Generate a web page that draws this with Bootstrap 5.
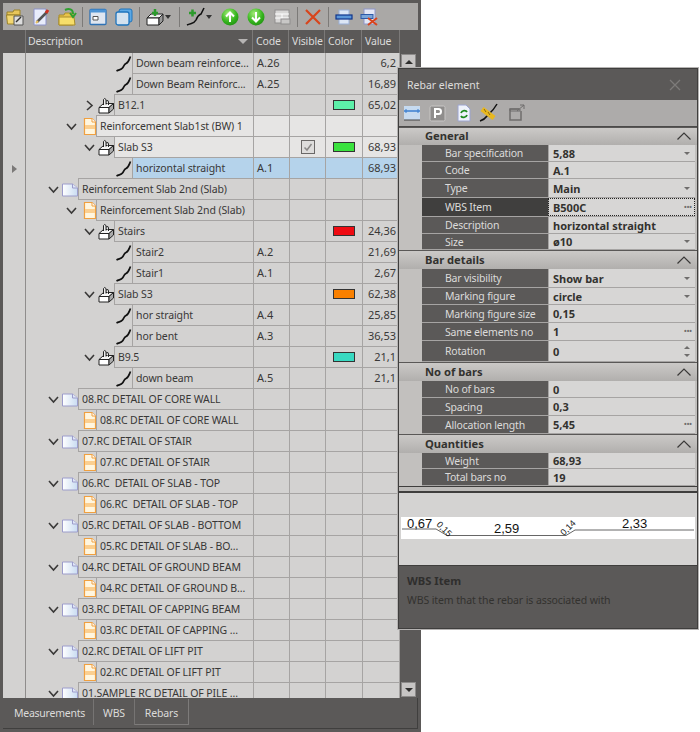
<!DOCTYPE html>
<html lang="en">
<head>
<meta charset="utf-8">
<title>Rebars</title>
<link href="https://cdn.jsdelivr.net/npm/bootstrap@5.3.0/dist/css/bootstrap.min.css" rel="stylesheet">
<style>
html,body{margin:0;background:#fff;height:732px;overflow:hidden}
body{font-family:"Noto Sans","Liberation Sans",sans-serif;font-size:11px;line-height:1;color:#393837}
.app-win{width:421px;height:732px;background:#5b5958;padding:3px}
.tb{height:27px;background:#aaa8a6;padding-left:0}
.tb-i{width:26px;height:26px;flex:none;display:flex;align-items:center;justify-content:center}
.tb-i:first-child{margin-left:-1px}
.tb-i svg{width:20px;height:20px;flex:none}
.tb-i.wide{width:35px;justify-content:flex-start;padding-left:3px}
.tb-i.wide2{padding-left:4px}
.tb-sep{width:1px;height:20px;background:#7c7a78;margin:0 2px;flex:none;align-self:center}
.hd{height:23px;color:#dcdbda;font-size:10.5px;letter-spacing:-.15px}
.hd>div{height:100%;display:flex;align-items:center;padding-left:4px;padding-bottom:0;border-right:1px solid #7b7978}
.hd .gut{border-right:1px solid #7b7978;background:none}
.hd .tree{justify-content:space-between;padding-right:4px;padding-left:2px}
.hd .c-val{border-right:1px solid #7b7978}
.tri-d{width:0;height:0;border-left:5px solid transparent;border-right:5px solid transparent;border-top:5px solid #b6b4b3}
.body-wrap{height:645px;overflow:hidden}
.gridz{width:397px;height:645px;overflow:hidden;background:#d3d2d1;flex:none}
.gr{height:21px}
.gut{width:23px;flex:none;background:#d3d2d1;border-right:1px solid #8f8d8c;display:flex;align-items:center;justify-content:center}
.tree{width:227px;flex:none;align-items:stretch}
.t0{padding-left:22px}.t1{padding-left:40px}.t2{padding-left:58px}.t3{padding-left:76px}
.chv{width:14px;flex:none;display:flex;align-items:center}
.chv svg{width:11px;height:11px;fill:none;stroke:#3a3938;stroke-width:1.6}
.ic{width:16px;flex:none;height:21px}
.tcell{flex:1 1 0;min-width:0;white-space:nowrap;overflow:hidden;padding:0 0 0 3px;display:flex;align-items:center;border-left:1px solid #a6a4a3;border-bottom:1px solid #a6a4a3;box-shadow:0 -1px 0 #a6a4a3;font-size:10.5px;letter-spacing:-.1px}
.gc{height:21px;border-left:1px solid #a6a4a3;border-bottom:1px solid #a6a4a3;display:flex;align-items:center;flex:none;padding-bottom:2px}
.c-code{width:36px;padding-left:3px}
.c-vis{width:36px;justify-content:center}
.c-col{width:37px;justify-content:center}
.c-val{width:38px;justify-content:flex-end;padding-right:3px;border-right:1px solid #a6a4a3;overflow:hidden}
.hd .c-code,.hd .c-vis,.hd .c-col,.hd .c-val{justify-content:flex-start;padding-left:3px;padding-right:0}
.lit .tcell,.lit .gc{background:#e6e5e4}
.sel .tcell,.sel .gc{background:#b5d3eb}
.sw{width:22px;height:10px;border:1px solid #333;margin-top:1px}
.sw-a{background:#5df0a9}.sw-b{background:#3ae23e}.sw-c{background:#ef0b12}.sw-d{background:#f98000}.sw-e{background:#38d9c1}
.chk{width:14px;height:14px;border:1px solid #6a6867;background:#dedddc;display:flex;align-items:center;justify-content:center;margin-top:1px}
.chk svg{width:10px;height:10px;fill:none;stroke:#8a8887;stroke-width:1.5}
.sb{width:18px;flex:none;padding:1px 2px 1px 1px}
.sb-b{height:15px;width:15px;background:#c7c5c4;border:1px solid #8d8b8a;display:flex;align-items:center;justify-content:center}
.tri-u8{width:0;height:0;border-left:4px solid transparent;border-right:4px solid transparent;border-bottom:4px solid #2f2e2d}
.tri-d8{width:0;height:0;border-left:4px solid transparent;border-right:4px solid transparent;border-top:4px solid #2f2e2d}
.tabs-bar{height:31px;align-items:flex-start;border-bottom:1px solid #403f3e;border-right:1px solid #403f3e}
.nav .tab-i{color:#dcdbda;font-size:10.5px;letter-spacing:-.1px;height:26px;display:flex;align-items:center;justify-content:center;padding-top:3px;margin-top:1px;border-right:1px solid #767473}
.nav .tab-a{width:91px;justify-content:flex-start;padding-left:11px;letter-spacing:-.25px}
.nav .tab-b{width:41px}
.nav .tab-c{width:54px;border:1px solid #7d7b7a;border-top:none;border-left:none}
.arrow-gut{width:0;height:0;border-top:4px solid transparent;border-bottom:4px solid transparent;border-left:5px solid #7b7978}
.pop{left:398px;top:68px;width:300px;height:561px;background:#5b5958;border:1px solid #3f3e3d;box-shadow:0 0 0 1px #b5b3b2}
.pop-t{height:31px;padding:1px 16px 0 8px;color:#dedddc;font-size:10.5px}
.pop-t svg{width:12px;height:12px;stroke:#7d7b7a;stroke-width:1.3;fill:none}
.pop-tb{height:27px;background:#adabaa;border-bottom:1px solid #4b4a49;padding-left:3px;gap:5px}
.pop-tb svg{width:20px;height:20px;flex:none}
.pop-tb .ml2{margin-left:2px}
.pop-tb .ml3{margin-left:3px}
.gh{background:linear-gradient(#cbc9c7,#b1afad);border-top:1px solid #5a5857;font-weight:700;color:#33322f;padding:0 6px 1px 26px;font-size:11.2px}
.gh svg{width:14px;height:8px;fill:none;stroke:#3a3938;stroke-width:1.2}
.gbody{background:#c2c0be;padding-left:23px;padding-right:2px}
.pr{border-bottom:1px solid #a6a4a3}
.pl{width:126px;flex:none;background:#5b5958;color:#dcdbda;padding:1px 0 0 23px;display:flex;align-items:center;font-size:10.5px;letter-spacing:-.2px;white-space:nowrap}
.pv{flex:1 1 0;background:#d7d6d5;font-weight:700;color:#33322f;padding:0 3px 0 4px;display:flex;align-items:center;justify-content:space-between;border-left:1px solid #a6a4a3}
.cur .pl{background:#403f3e}
.cur .pv{outline:1px dotted #222;outline-offset:-1px}
.dd{width:0;height:0;border-left:3px solid transparent;border-right:3px solid transparent;border-top:3px solid #6f6d6c;margin-right:2px}
.tb .dd{border-left-width:3.5px;border-right-width:3.5px;border-top:4px solid #333;margin:0;flex:none}
.dots{color:#6f6d6c;font-size:7px;line-height:1}
.spin{display:flex;flex-direction:column;gap:5px;margin-right:2px}
.spin i{display:block;width:0;height:0;border-left:3px solid transparent;border-right:3px solid transparent}
.spin i:first-child{border-bottom:3px solid #6f6d6c}.spin i:last-child{border-top:3px solid #6f6d6c}
.h16{height:16px}.h17{height:17px}.h18{height:18px}.h19{height:19px}.h21{height:21px}
.strip{height:4px;background:#bdbbb9;border-top:1px solid #3f3e3d;border-bottom:2px solid #3f3e3d;box-sizing:content-box}
.prev{height:72px;background:#d4d3d2;padding:24px 2px 0 2px}
.prev svg{display:block;background:#fff;width:294px;height:22px}
.prev text{font-family:"Liberation Sans",Arial,sans-serif;fill:#111}
.help{height:63px;padding:9px 8px 0 8px;color:#2f2e2d;border-top:1px solid #3f3e3d}
.help b{display:block;font-size:11.2px;margin-bottom:9px}
.help p{margin:0;font-size:10.5px;letter-spacing:-.1px;color:#33322f}
</style>
</head>
<body>
<svg width="0" height="0" class="position-absolute">
<defs>
<linearGradient id="gdoc" x1="0" y1="0" x2="1" y2="0"><stop offset="0" stop-color="#fff"/><stop offset="1" stop-color="#c9dcf2"/></linearGradient>
<radialGradient id="ggr" cx=".4" cy=".3" r=".8"><stop offset="0" stop-color="#a4ec7a"/><stop offset=".6" stop-color="#35b41d"/><stop offset="1" stop-color="#1d8a10"/></radialGradient>
<symbol id="i-bar" viewBox="0 0 16 21"><path d="M0.5 18 C3 16.5 5 17 6.500 15 C8 13 8 11.500 10 10.500 C12.500 9.500 13 7 14.500 3.500" fill="none" stroke="#111" stroke-width="1.700"/></symbol>
<symbol id="i-box" viewBox="0 0 16 21"><path d="M1 12.500L5.500 8.500H15.500L11 12.500Z" fill="#f5f5f5" stroke="#222"/><path d="M5.500 10V4.500Q6.500 2.500 8 4.500V9.500M8 6Q10.500 4.500 10.500 7V10" fill="#eee" stroke="#222"/><path d="M1 12.500H11V18H1Z" fill="#fff" stroke="#222"/><path d="M11 12.500L15.500 8.500V14L11 18Z" fill="#aaa" stroke="#222"/></symbol>
<symbol id="i-doc" viewBox="0 0 16 21"><path d="M0.500 5H10.500L15.500 9V17H0.500Z" fill="url(#gdoc)" stroke="#9c9ccb"/><path d="M10.500 5V9H15.500" fill="#dfe6f6" stroke="#9c9ccb"/></symbol>
<symbol id="i-sheet" viewBox="0 0 16 21"><path d="M4.500 2.500H12L15.500 6V18.500H4.500Z" fill="#fff6df" stroke="#f0a040" stroke-width="1.200"/><path d="M5 9H15V13H5Z" fill="#fbcf90"/><path d="M12 2.500V6H15.500" fill="#fff" stroke="#f0a040"/></symbol>
<symbol id="i-dn" viewBox="0 0 11 11"><path d="M1 3L5.500 8L10 3"/></symbol>
<symbol id="i-rt" viewBox="0 0 11 11"><path d="M3 1L8 5.500L3 10"/></symbol>
<symbol id="i-up" viewBox="0 0 14 8"><path d="M0.500 7.500L7 1L13.500 7.500"/></symbol>
</defs>
</svg>
<div class="app-win d-flex flex-column">
  <div class="tb btn-toolbar d-flex align-items-center flex-nowrap">
    <div class="tb-i"><svg viewBox="0 0 20 20"><path d="M2 5H8L9 3H15V8H2Z" fill="#e8c65a" stroke="#9c8328"/><path d="M1.500 8H15L16 17H2.500Z" fill="#f3d772" stroke="#9c8328"/><path d="M9 9H18V18H9Z" fill="#ddd" stroke="#555"/><path d="M11 15L16 10" stroke="#333" stroke-width="1.500"/></svg></div>
    <div class="tb-i"><svg viewBox="0 0 20 20"><path d="M3 2H15V18H3Z" fill="#e8ecfb" stroke="#8c92c8"/><path d="M6 15L16 5" stroke="#555" stroke-width="2.500"/><path d="M15 6L17 3" stroke="#d03020" stroke-width="3"/><path d="M5 16L7 14" stroke="#e9c060" stroke-width="2"/></svg></div>
    <div class="tb-i"><svg viewBox="0 0 20 20"><path d="M2 8H7L8 6H16V18H2Z" fill="#e9c44a" stroke="#a98d2a"/><path d="M2 10H17L18 18H2Z" fill="#f7de6a" stroke="#a98d2a"/><path d="M8 3C12 1 16 2 16 7M13 6L16 10L19 6" fill="none" stroke="#2fa02f" stroke-width="2"/></svg></div>
    <div class="tb-sep"></div>
    <div class="tb-i"><svg viewBox="0 0 20 20"><rect x="2" y="2.500" width="16" height="15" rx="1" fill="#dfe6f0" stroke="#2f72b5" stroke-width="1.300"/><rect x="2" y="2.500" width="16" height="3" fill="#4d94d5"/><path d="M5 9.500H10V13H5Z" fill="#fff" stroke="#555"/></svg></div>
    <div class="tb-i"><svg viewBox="0 0 20 20"><rect x="5" y="2" width="13" height="13" rx="2" fill="#5ba8e5" stroke="#1e74bd"/><rect x="2" y="5" width="13" height="13" rx="2" fill="#d3e2ef" stroke="#1e74bd" stroke-width="1.300"/></svg></div>
    <div class="tb-sep"></div>
    <div class="tb-i wide"><svg viewBox="0 0 20 20"><path d="M2 11L6 7H18L14 11Z" fill="#eee" stroke="#222"/><path d="M2 11H14V18H2Z" fill="#fff" stroke="#222"/><path d="M14 11L18 7V14L14 18Z" fill="#999" stroke="#222"/><path d="M7 6H13M10 2V9" stroke="#2c9a2c" stroke-width="2.500"/></svg><span class="dd"></span></div>
    <div class="tb-sep"></div>
    <div class="tb-i wide wide2"><svg viewBox="0 0 20 20"><path d="M1 18C5 16 8 17 10 13C12 8 13 8 15 7C16 5 17 3 18 1" fill="none" stroke="#111" stroke-width="1.600"/><path d="M3 6H10M6.500 2.500V9.500" stroke="#2c9a2c" stroke-width="2.500"/></svg><span class="dd"></span></div>
    <div class="tb-i"><svg viewBox="0 0 20 20"><circle cx="10" cy="10" r="8.500" fill="url(#ggr)"/><path d="M10 15V6M6 9.500L10 5.500L14 9.500" fill="none" stroke="#fff" stroke-width="2"/></svg></div>
    <div class="tb-i"><svg viewBox="0 0 20 20"><circle cx="10" cy="10" r="8.500" fill="url(#ggr)"/><path d="M10 5V14M6 10.500L10 14.500L14 10.500" fill="none" stroke="#fff" stroke-width="2"/></svg></div>
    <div class="tb-i"><svg viewBox="0 0 20 20"><rect x="3" y="3" width="14" height="13" fill="#d8d7d6" stroke="#8f8e8d"/><path d="M3 7H17M3 11H17M10 7V16" stroke="#fff"/><rect x="9" y="12" width="9" height="5" fill="#c8c7c6" stroke="#8f8e8d"/></svg></div>
    <div class="tb-sep"></div>
    <div class="tb-i"><svg viewBox="0 0 20 20"><path d="M3 3L17 17M17 3L3 17" stroke="#d8451c" stroke-width="2.200"/></svg></div>
    <div class="tb-sep"></div>
    <div class="tb-i"><svg viewBox="0 0 20 20"><rect x="5" y="3" width="10" height="14" fill="#dce6f5" stroke="#9ab0d8"/><rect x="2" y="8" width="16" height="4" fill="#5a96d8" stroke="#10358c" stroke-width="1.200"/></svg></div>
    <div class="tb-i"><svg viewBox="0 0 20 20"><rect x="4" y="2" width="11" height="15" fill="#e3e7f5" stroke="#8f96c8"/><rect x="1" y="7.500" width="12" height="4" fill="#7aa5d8" stroke="#2c5aa8"/><path d="M8 11L17 18M17 11L8 18" stroke="#d8451c" stroke-width="2"/></svg></div>
  </div>
  <div class="hd d-flex">
    <div class="gut"></div>
    <div class="tree d-flex"><span>Description</span><span class="tri-d"></span></div>
    <div class="c-code">Code</div>
    <div class="c-vis">Visible</div>
    <div class="c-col">Color</div>
    <div class="c-val">Value</div>
  </div>
  <div class="body-wrap d-flex">
    <div class="gridz">
      <div class="gr d-flex"><div class="gut"></div><div class="tree d-flex t3"><span class="chv"></span><svg class="ic"><use href="#i-bar"/></svg><div class="tcell">Down beam reinforce...</div></div><div class="gc c-code">A.26</div><div class="gc c-vis"></div><div class="gc c-col"></div><div class="gc c-val">6,2</div></div>
      <div class="gr d-flex"><div class="gut"></div><div class="tree d-flex t3"><span class="chv"></span><svg class="ic"><use href="#i-bar"/></svg><div class="tcell">Down Beam Reinforc...</div></div><div class="gc c-code">A.25</div><div class="gc c-vis"></div><div class="gc c-col"></div><div class="gc c-val">16,89</div></div>
      <div class="gr d-flex"><div class="gut"></div><div class="tree d-flex t2"><span class="chv"><svg><use href="#i-rt"/></svg></span><svg class="ic"><use href="#i-box"/></svg><div class="tcell">B12.1</div></div><div class="gc c-code"></div><div class="gc c-vis"></div><div class="gc c-col"><span class="sw sw-a"></span></div><div class="gc c-val">65,02</div></div>
      <div class="gr d-flex lit"><div class="gut"></div><div class="tree d-flex t1"><span class="chv"><svg><use href="#i-dn"/></svg></span><svg class="ic"><use href="#i-sheet"/></svg><div class="tcell">Reinforcement Slab1st (BW) 1</div></div><div class="gc c-code"></div><div class="gc c-vis"></div><div class="gc c-col"></div><div class="gc c-val"></div></div>
      <div class="gr d-flex lit"><div class="gut"></div><div class="tree d-flex t2"><span class="chv"><svg><use href="#i-dn"/></svg></span><svg class="ic"><use href="#i-box"/></svg><div class="tcell">Slab S3</div></div><div class="gc c-code"></div><div class="gc c-vis"><span class="chk"><svg viewBox="0 0 10 10"><path d="M1.500 5.500L4 8L8.500 2"/></svg></span></div><div class="gc c-col"><span class="sw sw-b"></span></div><div class="gc c-val">68,93</div></div>
      <div class="gr d-flex sel"><div class="gut"><span class="arrow-gut"></span></div><div class="tree d-flex t3"><span class="chv"></span><svg class="ic"><use href="#i-bar"/></svg><div class="tcell">horizontal straight</div></div><div class="gc c-code">A.1</div><div class="gc c-vis"></div><div class="gc c-col"></div><div class="gc c-val">68,93</div></div>
      <div class="gr d-flex"><div class="gut"></div><div class="tree d-flex t0"><span class="chv"><svg><use href="#i-dn"/></svg></span><svg class="ic"><use href="#i-doc"/></svg><div class="tcell">Reinforcement Slab 2nd (Slab)</div></div><div class="gc c-code"></div><div class="gc c-vis"></div><div class="gc c-col"></div><div class="gc c-val"></div></div>
      <div class="gr d-flex"><div class="gut"></div><div class="tree d-flex t1"><span class="chv"><svg><use href="#i-dn"/></svg></span><svg class="ic"><use href="#i-sheet"/></svg><div class="tcell">Reinforcement Slab 2nd (Slab)</div></div><div class="gc c-code"></div><div class="gc c-vis"></div><div class="gc c-col"></div><div class="gc c-val"></div></div>
      <div class="gr d-flex"><div class="gut"></div><div class="tree d-flex t2"><span class="chv"><svg><use href="#i-dn"/></svg></span><svg class="ic"><use href="#i-box"/></svg><div class="tcell">Stairs</div></div><div class="gc c-code"></div><div class="gc c-vis"></div><div class="gc c-col"><span class="sw sw-c"></span></div><div class="gc c-val">24,36</div></div>
      <div class="gr d-flex"><div class="gut"></div><div class="tree d-flex t3"><span class="chv"></span><svg class="ic"><use href="#i-bar"/></svg><div class="tcell">Stair2</div></div><div class="gc c-code">A.2</div><div class="gc c-vis"></div><div class="gc c-col"></div><div class="gc c-val">21,69</div></div>
      <div class="gr d-flex"><div class="gut"></div><div class="tree d-flex t3"><span class="chv"></span><svg class="ic"><use href="#i-bar"/></svg><div class="tcell">Stair1</div></div><div class="gc c-code">A.1</div><div class="gc c-vis"></div><div class="gc c-col"></div><div class="gc c-val">2,67</div></div>
      <div class="gr d-flex"><div class="gut"></div><div class="tree d-flex t2"><span class="chv"><svg><use href="#i-dn"/></svg></span><svg class="ic"><use href="#i-box"/></svg><div class="tcell">Slab S3</div></div><div class="gc c-code"></div><div class="gc c-vis"></div><div class="gc c-col"><span class="sw sw-d"></span></div><div class="gc c-val">62,38</div></div>
      <div class="gr d-flex"><div class="gut"></div><div class="tree d-flex t3"><span class="chv"></span><svg class="ic"><use href="#i-bar"/></svg><div class="tcell">hor straight</div></div><div class="gc c-code">A.4</div><div class="gc c-vis"></div><div class="gc c-col"></div><div class="gc c-val">25,85</div></div>
      <div class="gr d-flex"><div class="gut"></div><div class="tree d-flex t3"><span class="chv"></span><svg class="ic"><use href="#i-bar"/></svg><div class="tcell">hor bent</div></div><div class="gc c-code">A.3</div><div class="gc c-vis"></div><div class="gc c-col"></div><div class="gc c-val">36,53</div></div>
      <div class="gr d-flex"><div class="gut"></div><div class="tree d-flex t2"><span class="chv"><svg><use href="#i-dn"/></svg></span><svg class="ic"><use href="#i-box"/></svg><div class="tcell">B9.5</div></div><div class="gc c-code"></div><div class="gc c-vis"></div><div class="gc c-col"><span class="sw sw-e"></span></div><div class="gc c-val">21,1</div></div>
      <div class="gr d-flex"><div class="gut"></div><div class="tree d-flex t3"><span class="chv"></span><svg class="ic"><use href="#i-bar"/></svg><div class="tcell">down beam</div></div><div class="gc c-code">A.5</div><div class="gc c-vis"></div><div class="gc c-col"></div><div class="gc c-val">21,1</div></div>
      <div class="gr d-flex"><div class="gut"></div><div class="tree d-flex t0"><span class="chv"><svg><use href="#i-dn"/></svg></span><svg class="ic"><use href="#i-doc"/></svg><div class="tcell">08.RC DETAIL OF CORE WALL</div></div><div class="gc c-code"></div><div class="gc c-vis"></div><div class="gc c-col"></div><div class="gc c-val"></div></div>
      <div class="gr d-flex"><div class="gut"></div><div class="tree d-flex t1"><span class="chv"></span><svg class="ic"><use href="#i-sheet"/></svg><div class="tcell">08.RC DETAIL OF CORE WALL</div></div><div class="gc c-code"></div><div class="gc c-vis"></div><div class="gc c-col"></div><div class="gc c-val"></div></div>
      <div class="gr d-flex"><div class="gut"></div><div class="tree d-flex t0"><span class="chv"><svg><use href="#i-dn"/></svg></span><svg class="ic"><use href="#i-doc"/></svg><div class="tcell">07.RC DETAIL OF STAIR</div></div><div class="gc c-code"></div><div class="gc c-vis"></div><div class="gc c-col"></div><div class="gc c-val"></div></div>
      <div class="gr d-flex"><div class="gut"></div><div class="tree d-flex t1"><span class="chv"></span><svg class="ic"><use href="#i-sheet"/></svg><div class="tcell">07.RC DETAIL OF STAIR</div></div><div class="gc c-code"></div><div class="gc c-vis"></div><div class="gc c-col"></div><div class="gc c-val"></div></div>
      <div class="gr d-flex"><div class="gut"></div><div class="tree d-flex t0"><span class="chv"><svg><use href="#i-dn"/></svg></span><svg class="ic"><use href="#i-doc"/></svg><div class="tcell">06.RC&nbsp; DETAIL OF SLAB - TOP</div></div><div class="gc c-code"></div><div class="gc c-vis"></div><div class="gc c-col"></div><div class="gc c-val"></div></div>
      <div class="gr d-flex"><div class="gut"></div><div class="tree d-flex t1"><span class="chv"></span><svg class="ic"><use href="#i-sheet"/></svg><div class="tcell">06.RC&nbsp; DETAIL OF SLAB - TOP</div></div><div class="gc c-code"></div><div class="gc c-vis"></div><div class="gc c-col"></div><div class="gc c-val"></div></div>
      <div class="gr d-flex"><div class="gut"></div><div class="tree d-flex t0"><span class="chv"><svg><use href="#i-dn"/></svg></span><svg class="ic"><use href="#i-doc"/></svg><div class="tcell">05.RC DETAIL OF SLAB - BOTTOM</div></div><div class="gc c-code"></div><div class="gc c-vis"></div><div class="gc c-col"></div><div class="gc c-val"></div></div>
      <div class="gr d-flex"><div class="gut"></div><div class="tree d-flex t1"><span class="chv"></span><svg class="ic"><use href="#i-sheet"/></svg><div class="tcell">05.RC DETAIL OF SLAB - BO...</div></div><div class="gc c-code"></div><div class="gc c-vis"></div><div class="gc c-col"></div><div class="gc c-val"></div></div>
      <div class="gr d-flex"><div class="gut"></div><div class="tree d-flex t0"><span class="chv"><svg><use href="#i-dn"/></svg></span><svg class="ic"><use href="#i-doc"/></svg><div class="tcell">04.RC DETAIL OF GROUND BEAM</div></div><div class="gc c-code"></div><div class="gc c-vis"></div><div class="gc c-col"></div><div class="gc c-val"></div></div>
      <div class="gr d-flex"><div class="gut"></div><div class="tree d-flex t1"><span class="chv"></span><svg class="ic"><use href="#i-sheet"/></svg><div class="tcell">04.RC DETAIL OF GROUND B...</div></div><div class="gc c-code"></div><div class="gc c-vis"></div><div class="gc c-col"></div><div class="gc c-val"></div></div>
      <div class="gr d-flex"><div class="gut"></div><div class="tree d-flex t0"><span class="chv"><svg><use href="#i-dn"/></svg></span><svg class="ic"><use href="#i-doc"/></svg><div class="tcell">03.RC DETAIL OF CAPPING BEAM</div></div><div class="gc c-code"></div><div class="gc c-vis"></div><div class="gc c-col"></div><div class="gc c-val"></div></div>
      <div class="gr d-flex"><div class="gut"></div><div class="tree d-flex t1"><span class="chv"></span><svg class="ic"><use href="#i-sheet"/></svg><div class="tcell">03.RC DETAIL OF CAPPING ...</div></div><div class="gc c-code"></div><div class="gc c-vis"></div><div class="gc c-col"></div><div class="gc c-val"></div></div>
      <div class="gr d-flex"><div class="gut"></div><div class="tree d-flex t0"><span class="chv"><svg><use href="#i-dn"/></svg></span><svg class="ic"><use href="#i-doc"/></svg><div class="tcell">02.RC DETAIL OF LIFT PIT</div></div><div class="gc c-code"></div><div class="gc c-vis"></div><div class="gc c-col"></div><div class="gc c-val"></div></div>
      <div class="gr d-flex"><div class="gut"></div><div class="tree d-flex t1"><span class="chv"></span><svg class="ic"><use href="#i-sheet"/></svg><div class="tcell">02.RC DETAIL OF LIFT PIT</div></div><div class="gc c-code"></div><div class="gc c-vis"></div><div class="gc c-col"></div><div class="gc c-val"></div></div>
      <div class="gr d-flex"><div class="gut"></div><div class="tree d-flex t0"><span class="chv"><svg><use href="#i-dn"/></svg></span><svg class="ic"><use href="#i-doc"/></svg><div class="tcell">01.SAMPLE RC DETAIL OF PILE ...</div></div><div class="gc c-code"></div><div class="gc c-vis"></div><div class="gc c-col"></div><div class="gc c-val"></div></div>
    </div>
    <div class="sb d-flex flex-column justify-content-between">
      <div class="sb-b"><span class="tri-u8"></span></div>
      <div class="sb-b"><span class="tri-d8"></span></div>
    </div>
  </div>
  <div class="nav tabs-bar d-flex">
    <div class="tab-i tab-a">Measurements</div>
    <div class="tab-i tab-b">WBS</div>
    <div class="tab-i tab-c">Rebars</div>
  </div>
</div>

<div class="pop position-absolute d-flex flex-column">
  <div class="pop-t d-flex align-items-center justify-content-between"><span>Rebar element</span><svg viewBox="0 0 12 12"><path d="M1 1L11 11M11 1L1 11"/></svg></div>
  <div class="pop-tb d-flex align-items-center">
    <svg viewBox="0 0 20 20"><rect x="2" y="3" width="16" height="14" fill="#c6daf0"/><path d="M2 17H18" stroke="#444"/><path d="M2 8H18" stroke="#3a7ed0" stroke-width="1.500"/><path d="M4 6V10M16 6V10" stroke="#3a7ed0"/></svg>
    <svg viewBox="0 0 20 20"><rect x="3" y="3" width="15" height="15" rx="1.500" fill="#8f8d8c" stroke="#c8c6c5"/><path d="M8 15V6H11.500Q14 6 14 8.500Q14 11 11.500 11H8" fill="none" stroke="#fff" stroke-width="2"/></svg>
    <svg class="ml2" viewBox="0 0 20 20"><path d="M4 2H12L16 6V18H4Z" fill="#eef2fb" stroke="#9ca4d0"/><path d="M7 10C8 7 12 7 13 9M13 12C12 15 8 15 7 13" fill="none" stroke="#1f8a1f" stroke-width="1.800"/></svg>
    <svg viewBox="0 0 20 20"><path d="M1 18C4 17 6 16 8 13C11 10 14 8 18 1" fill="none" stroke="#111" stroke-width="1.500"/><path d="M3 6L15 15" stroke="#e8b820" stroke-width="5"/><path d="M5 6L7 9M9 9L11 12" stroke="#8a6a10"/></svg>
    <svg class="ml3" viewBox="0 0 20 20"><path d="M14 8V17H3V6H12" fill="none" stroke="#6f6d6c" stroke-width="1.500"/><path d="M3 6H13V8H3ZM10 8L17 2M13 2H17V6" fill="none" stroke="#6f6d6c"/></svg>
  </div>

  <div class="gh h18 d-flex align-items-center justify-content-between"><span>General</span><svg><use href="#i-up"/></svg></div>
  <div class="gbody">
    <div class="pr h17 d-flex"><div class="pl">Bar specification</div><div class="pv">5,88<span class="dd"></span></div></div>
    <div class="pr h17 d-flex"><div class="pl">Code</div><div class="pv">A.1</div></div>
    <div class="pr h19 d-flex"><div class="pl">Type</div><div class="pv">Main<span class="dd"></span></div></div>
    <div class="pr h19 d-flex cur"><div class="pl">WBS Item</div><div class="pv">B500C<span class="dots">•••</span></div></div>
    <div class="pr h17 d-flex"><div class="pl">Description</div><div class="pv">horizontal straight</div></div>
    <div class="pr h16 d-flex"><div class="pl">Size</div><div class="pv">ø10<span class="dd"></span></div></div>
  </div>
  <div class="gh h19 d-flex align-items-center justify-content-between"><span>Bar details</span><svg><use href="#i-up"/></svg></div>
  <div class="gbody">
    <div class="pr h19 d-flex"><div class="pl">Bar visibility</div><div class="pv">Show bar<span class="dd"></span></div></div>
    <div class="pr h17 d-flex"><div class="pl">Marking figure</div><div class="pv">circle<span class="dd"></span></div></div>
    <div class="pr h18 d-flex"><div class="pl">Marking figure size</div><div class="pv">0,15</div></div>
    <div class="pr h18 d-flex"><div class="pl">Same elements no</div><div class="pv">1<span class="dots">•••</span></div></div>
    <div class="pr h21 d-flex"><div class="pl">Rotation</div><div class="pv">0<span class="spin"><i></i><i></i></span></div></div>
  </div>
  <div class="gh h19 d-flex align-items-center justify-content-between"><span>No of bars</span><svg><use href="#i-up"/></svg></div>
  <div class="gbody">
    <div class="pr h17 d-flex"><div class="pl">No of bars</div><div class="pv">0</div></div>
    <div class="pr h18 d-flex"><div class="pl">Spacing</div><div class="pv">0,3</div></div>
    <div class="pr h18 d-flex"><div class="pl">Allocation length</div><div class="pv">5,45<span class="dots">•••</span></div></div>
  </div>
  <div class="gh h19 d-flex align-items-center justify-content-between"><span>Quantities</span><svg><use href="#i-up"/></svg></div>
  <div class="gbody">
    <div class="pr h16 d-flex"><div class="pl">Weight</div><div class="pv">68,93</div></div>
    <div class="pr h17 d-flex"><div class="pl">Total bars no</div><div class="pv">19</div></div>
  </div>
  <div class="strip"></div>
  <div class="prev">
    <svg viewBox="0 0 294 22">
      <path d="M1 12H35L46 18.500H165L174 13H293" fill="none" stroke="#666" stroke-width="1"/>
      <text x="6" y="11" font-size="13">0,67</text>
      <text x="93" y="16" font-size="13">2,59</text>
      <text x="221" y="11" font-size="13">2,33</text>
      <text x="35" y="8" font-size="9" transform="rotate(45 35 8)">0,15</text>
      <text x="163" y="19" font-size="9" transform="rotate(-45 163 19)">0,14</text>
    </svg>
  </div>
  <div class="help"><b>WBS Item</b><p>WBS item that the rebar is associated with</p></div>
</div>
<script src="https://cdn.jsdelivr.net/npm/bootstrap@5.3.0/dist/js/bootstrap.bundle.min.js"></script>
</body>
</html>
